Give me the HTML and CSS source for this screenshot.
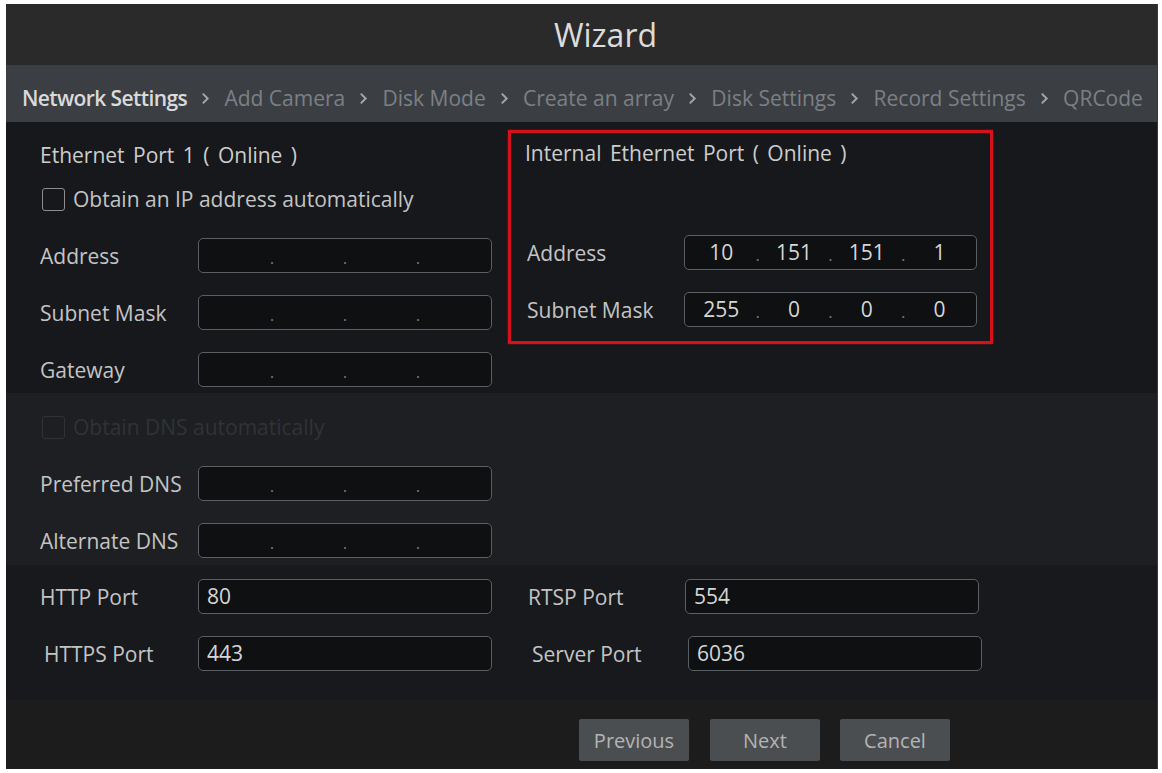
FILE: index.html
```html
<!DOCTYPE html>
<html lang="en">
<head>
<meta charset="utf-8">
<title>Wizard</title>
<link rel="stylesheet" href="styles.css">
</head>
<body>
<div class="frame">
  <header class="titlebar">Wizard</header>
  <nav class="crumbs">
    <span class="crumb active">Network Settings</span>
    <svg class="chev" viewBox="0 0 8 12"><polyline points="1.5,1.5 6,6 1.5,10.5"/></svg>
    <span class="crumb">Add Camera</span>
    <svg class="chev" viewBox="0 0 8 12"><polyline points="1.5,1.5 6,6 1.5,10.5"/></svg>
    <span class="crumb">Disk Mode</span>
    <svg class="chev" viewBox="0 0 8 12"><polyline points="1.5,1.5 6,6 1.5,10.5"/></svg>
    <span class="crumb">Create an array</span>
    <svg class="chev" viewBox="0 0 8 12"><polyline points="1.5,1.5 6,6 1.5,10.5"/></svg>
    <span class="crumb">Disk Settings</span>
    <svg class="chev" viewBox="0 0 8 12"><polyline points="1.5,1.5 6,6 1.5,10.5"/></svg>
    <span class="crumb">Record Settings</span>
    <svg class="chev" viewBox="0 0 8 12"><polyline points="1.5,1.5 6,6 1.5,10.5"/></svg>
    <span class="crumb">QRCode</span>
  </nav>

  <section class="net">
    <div class="eth">
      <div class="heading">Ethernet Port 1 ( Online )</div>
      <div class="check"><span class="box"></span><span>Obtain an IP address automatically</span></div>
      <div class="fields gap-top">
        <div class="row"><span class="lbl">Address</span>
          <div class="ip"><span class="seg"></span><span class="dot">.</span><span class="seg"></span><span class="dot">.</span><span class="seg"></span><span class="dot">.</span><span class="seg"></span></div>
        </div>
        <div class="row"><span class="lbl">Subnet Mask</span>
          <div class="ip"><span class="seg"></span><span class="dot">.</span><span class="seg"></span><span class="dot">.</span><span class="seg"></span><span class="dot">.</span><span class="seg"></span></div>
        </div>
        <div class="row"><span class="lbl">Gateway</span>
          <div class="ip"><span class="seg"></span><span class="dot">.</span><span class="seg"></span><span class="dot">.</span><span class="seg"></span><span class="dot">.</span><span class="seg"></span></div>
        </div>
      </div>
    </div>

    <div class="internal">
      <div class="heading">Internal Ethernet Port ( Online )</div>
      <div class="fields internal-fields">
        <div class="row"><span class="lbl lbl-in">Address</span>
          <div class="ip ip-in"><span class="seg">10</span><span class="dot">.</span><span class="seg">151</span><span class="dot">.</span><span class="seg">151</span><span class="dot">.</span><span class="seg">1</span></div>
        </div>
        <div class="row"><span class="lbl lbl-in">Subnet Mask</span>
          <div class="ip ip-in"><span class="seg">255</span><span class="dot">.</span><span class="seg">0</span><span class="dot">.</span><span class="seg">0</span><span class="dot">.</span><span class="seg">0</span></div>
        </div>
      </div>
    </div>
  </section>

  <section class="dns">
    <div class="check disabled"><span class="box"></span><span>Obtain DNS automatically</span></div>
    <div class="fields gap-top">
      <div class="row"><span class="lbl">Preferred DNS</span>
        <div class="ip"><span class="seg"></span><span class="dot">.</span><span class="seg"></span><span class="dot">.</span><span class="seg"></span><span class="dot">.</span><span class="seg"></span></div>
      </div>
      <div class="row"><span class="lbl">Alternate DNS</span>
        <div class="ip"><span class="seg"></span><span class="dot">.</span><span class="seg"></span><span class="dot">.</span><span class="seg"></span><span class="dot">.</span><span class="seg"></span></div>
      </div>
    </div>
  </section>

  <section class="ports">
    <span class="lbl">HTTP Port</span>
    <div class="text-in">80</div>
    <span class="lbl lbl-r">RTSP Port</span>
    <div class="text-in">554</div>
    <span class="lbl indent">HTTPS Port</span>
    <div class="text-in">443</div>
    <span class="lbl lbl-r indent">Server Port</span>
    <div class="text-in shift">6036</div>
  </section>

  <footer class="actions">
    <button class="btn">Previous</button>
    <button class="btn">Next</button>
    <button class="btn">Cancel</button>
  </footer>
</div>
</body>
</html>
```

FILE: styles.css
```css
html, body {
  margin: 0;
  padding: 0;
  background: #ffffff;
}

body {
  font-family: "Open Sans", "Noto Sans", sans-serif;
  font-size: 21px;
  color: #c4c4c4;
}

.frame {
  margin: 4px 0 0 6px;
  width: 1152px;
  height: 765px;
  background: #17191c;
  display: flex;
  flex-direction: column;
  overflow: hidden;
  border-right: 1px solid #3a3a3a;
  box-sizing: border-box;
}

.titlebar {
  height: 61px;
  flex: 0 0 61px;
  background: #2a2a2b;
  color: #dcdcdc;
  font-size: 32px;
  display: flex;
  align-items: center;
  justify-content: center;
  padding-left: 48px;
  line-height: 1;
}

.crumbs {
  height: 57px;
  flex: 0 0 57px;
  box-sizing: border-box;
  background: #3b3f43;
  display: flex;
  align-items: center;
  justify-content: space-between;
  padding: 8px 14px 0 16px;
  font-size: 21px;
  color: #7c8085;
  white-space: nowrap;
}

.crumb.active {
  color: #dadada;
  font-weight: 600;
  letter-spacing: -0.6px;
}

.chev {
  width: 9px;
  height: 13px;
  flex: 0 0 9px;
  margin-top: 2px;
}

.chev polyline {
  fill: none;
  stroke: #a4a7aa;
  stroke-width: 1.8;
}

/* sections */
.net {
  height: 271px;
  flex: 0 0 271px;
  box-sizing: border-box;
  background: #16181b;
  display: flex;
  align-items: flex-start;
  padding-left: 34px;
}

.eth {
  width: 452px;
  padding-top: 21px;
}

.heading {
  line-height: 24px;
  height: 24px;
  color: #cdcdcd;
  word-spacing: 3px;
  white-space: nowrap;
}

.check {
  display: flex;
  align-items: center;
  height: 24px;
  margin-top: 20px;
  gap: 8px;
  color: #c4c4c4;
  white-space: nowrap;
}

.check .box {
  width: 23px;
  height: 23px;
  box-sizing: border-box;
  border: 1.5px solid #8b8d90;
  border-radius: 3px;
  margin-left: 2px;
  flex: 0 0 23px;
}

.check.disabled {
  color: #303336;
}

.check.disabled .box {
  border-color: #303336;
}

.fields {
  display: flex;
  flex-direction: column;
  gap: 22px;
}

.gap-top {
  margin-top: 27px;
}

.row {
  display: flex;
  align-items: center;
  height: 35px;
}

.lbl {
  width: 158px;
  flex: 0 0 158px;
  white-space: nowrap;
  color: #c4c4c4;
}

.ip {
  width: 294px;
  height: 35px;
  box-sizing: border-box;
  border: 1px solid #5b5e62;
  border-radius: 5px;
  background: #0e1012;
  display: flex;
  align-items: center;
  color: #d6d6d6;
}

.seg {
  flex: 1 1 0;
  text-align: center;
  line-height: 33px;
}

.dot {
  width: 0;
  display: flex;
  justify-content: center;
  color: #75787c;
  line-height: 33px;
  font-size: 17px;
  padding-top: 3px;
}

.internal {
  width: 485px;
  height: 214px;
  box-sizing: border-box;
  margin: 8px 0 0 16px;
  border: 3px solid #d3121c;
  box-shadow: 0 0 2px rgba(220, 20, 30, 0.6);
  padding: 8px 13px 14px 14px;
}

.internal-fields {
  margin-top: 70px;
}

.lbl-in {
  width: 159px;
  flex: 0 0 159px;
  padding-left: 2px;
  box-sizing: border-box;
}

.ip-in {
  width: 293px;
}

.dns {
  height: 172px;
  flex: 0 0 172px;
  box-sizing: border-box;
  background: #1d1f22;
  padding: 22px 0 0 34px;
}

.dns .check {
  margin-top: 0;
}

.ports {
  height: 135px;
  flex: 0 0 135px;
  box-sizing: border-box;
  background: #17191c;
  padding: 14px 0 0 34px;
  display: grid;
  grid-template-columns: 158px 294px 193px 294px;
  grid-template-rows: 35px 35px;
  row-gap: 22px;
  align-items: center;
}

.ports .lbl-r {
  margin-left: 36px;
  width: 121px;
}

.indent {
  padding-left: 4px;
  box-sizing: border-box;
}

.text-in {
  height: 35px;
  box-sizing: border-box;
  border: 1px solid #5b5e62;
  border-radius: 5px;
  background: #0e1012;
  color: #d6d6d6;
  line-height: 33px;
  padding-left: 8px;
}

.text-in.shift {
  transform: translateX(3px);
}

.actions {
  flex: 1 1 auto;
  background: #1c1c1d;
  display: flex;
  align-items: flex-start;
  gap: 21px;
  padding: 19px 0 0 573px;
  box-sizing: border-box;
}

.btn {
  width: 110px;
  height: 42px;
  border: none;
  border-radius: 2px;
  background: #4b4e51;
  color: #b4b4b4;
  font-family: "Open Sans", "Noto Sans", sans-serif;
  font-size: 20px;
  padding: 0;
  cursor: pointer;
}

.btn + .btn + .btn {
  margin-left: -1px;
}
```
